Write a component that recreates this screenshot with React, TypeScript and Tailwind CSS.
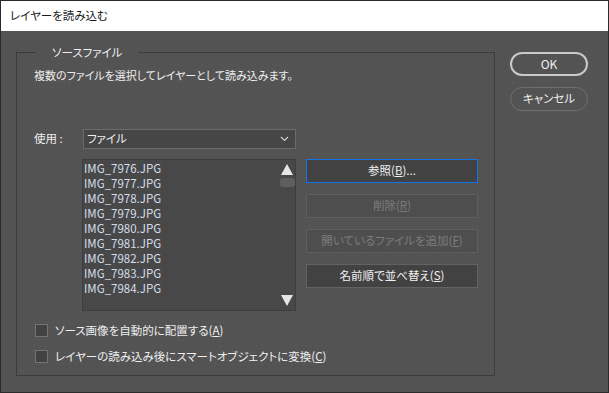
import React from 'react';

const files = [
  'IMG_7976.JPG',
  'IMG_7977.JPG',
  'IMG_7978.JPG',
  'IMG_7979.JPG',
  'IMG_7980.JPG',
  'IMG_7981.JPG',
  'IMG_7982.JPG',
  'IMG_7983.JPG',
  'IMG_7984.JPG',
];

const font = "font-['Noto_Sans_CJK_JP',sans-serif] [font-feature-settings:'palt']";

const ActionButton = ({
  children,
  disabled = false,
  focused = false,
}: {
  children: React.ReactNode;
  disabled?: boolean;
  focused?: boolean;
}) => (
  <div
    className={
      'h-[24px] flex items-center justify-center text-[11.5px] border ' +
      (focused
        ? 'bg-[#424242] border-[#1473e6] text-[#f0f0f0]'
        : disabled
          ? 'bg-[#4e4e4e] border-[#5f5f5f] text-[#7c7c7c]'
          : 'bg-[#424242] border-[#626262] text-[#f0f0f0]')
    }
  >
    {children}
  </div>
);

const CheckRow = ({ label, hotkey }: { label: string; hotkey: string }) => (
  <div className="flex items-center h-[13px]">
    <div className="w-[13px] h-[13px] border border-[#747474] bg-[#424242]" />
    <span className="ml-[7px] text-[11.5px] text-[#eeeeee] leading-none">
      {label}(<span className="underline">{hotkey}</span>)
    </span>
  </div>
);

export default function App() {
  return (
    <div className={`w-[609px] h-[393px] border border-[#2a2a2a] flex flex-col ${font}`}>
      {/* title bar */}
      <div className="h-[30px] bg-white flex items-center pl-[9px] text-[11.5px] text-[#1a1a1a]">
        レイヤーを読み込む
      </div>

      {/* body */}
      <div className="flex-1 flex bg-[#535353] bg-[radial-gradient(circle,#585858_0.6px,transparent_0.8px)] bg-[length:6px_6px] pl-[15px] pt-[13px]">
        <fieldset className="w-[479px] h-[332px] border border-[#3c3c3c] pl-[17px]">
          <legend className="ml-[2px] px-[16px] text-[11.5px] text-[#eeeeee] leading-[16px]">
            ソースファイル
          </legend>
          <div className="flex flex-col">
            <div className="mt-[7px] text-[11px] text-[#eeeeee] leading-[16px]">
              複数のファイルを選択してレイヤーとして読み込みます。
            </div>

            <div className="mt-[46px] flex items-center">
              <div className="w-[48px] text-[11.5px] text-[#eeeeee]">使用 :</div>
              <div className="ml-[1px] w-[213px] h-[20px] bg-[#464646] border border-[#6b6b6b] flex items-center justify-between pl-[3px] pr-[6px] text-[11.5px] text-[#f0f0f0]">
                <span>ファイル</span>
                <svg width="9" height="6" viewBox="0 0 9 6">
                  <path d="M1 1 L4.5 4.5 L8 1" stroke="#cfcfcf" strokeWidth="1.2" fill="none" />
                </svg>
              </div>
            </div>

            <div className="mt-[10px] ml-[48px] flex">
              <div className="w-[214px] h-[152px] bg-[#484848] border border-[#3d3d3d] flex">
                <div className="flex-1 pt-[1px] pl-[1px] flex flex-col">
                  {files.map((f) => (
                    <div key={f} className="h-[15px] leading-[15px] text-[11.5px] text-[#d4deea]">
                      {f}
                    </div>
                  ))}
                </div>
                <div className="w-[16px] flex flex-col items-center pt-[4px] pb-[4px]">
                  <svg width="12" height="11" viewBox="0 0 12 11">
                    <path d="M6 0 L12 11 L0 11 Z" fill="#e6e6e6" />
                  </svg>
                  <div className="mt-[3px] w-[15px] h-[9px] rounded-[3px] bg-[#5e5e5e]" />
                  <div className="flex-1" />
                  <svg width="12" height="11" viewBox="0 0 12 11">
                    <path d="M0 0 L12 0 L6 11 Z" fill="#e6e6e6" />
                  </svg>
                </div>
              </div>

              <div className="ml-[10px] w-[172px] flex flex-col gap-[11px]">
                <ActionButton focused>
                  参照(<span className="underline">B</span>)...
                </ActionButton>
                <ActionButton disabled>
                  削除(<span className="underline">R</span>)
                </ActionButton>
                <ActionButton disabled>
                  開いているファイルを追加(<span className="underline">F</span>)
                </ActionButton>
                <ActionButton>
                  名前順で並べ替え(<span className="underline">S</span>)
                </ActionButton>
              </div>
            </div>

            <div className="mt-[13px] ml-[1px] flex flex-col gap-[13px]">
              <CheckRow label="ソース画像を自動的に配置する" hotkey="A" />
              <CheckRow label="レイヤーの読み込み後にスマートオブジェクトに変換" hotkey="C" />
            </div>
          </div>
        </fieldset>

        <div className="ml-[15px] mt-[8px] w-[78px] flex flex-col gap-[11px]">
          <div className="h-[24px] rounded-full border-2 border-[#c9c9c9] flex items-center justify-center text-[12px] text-[#f0f0f0]">
            OK
          </div>
          <div className="h-[24px] rounded-full border border-[#6f6f6f] flex items-center justify-center text-[11.5px] text-[#f0f0f0]">
            キャンセル
          </div>
        </div>
      </div>
    </div>
  );
}
